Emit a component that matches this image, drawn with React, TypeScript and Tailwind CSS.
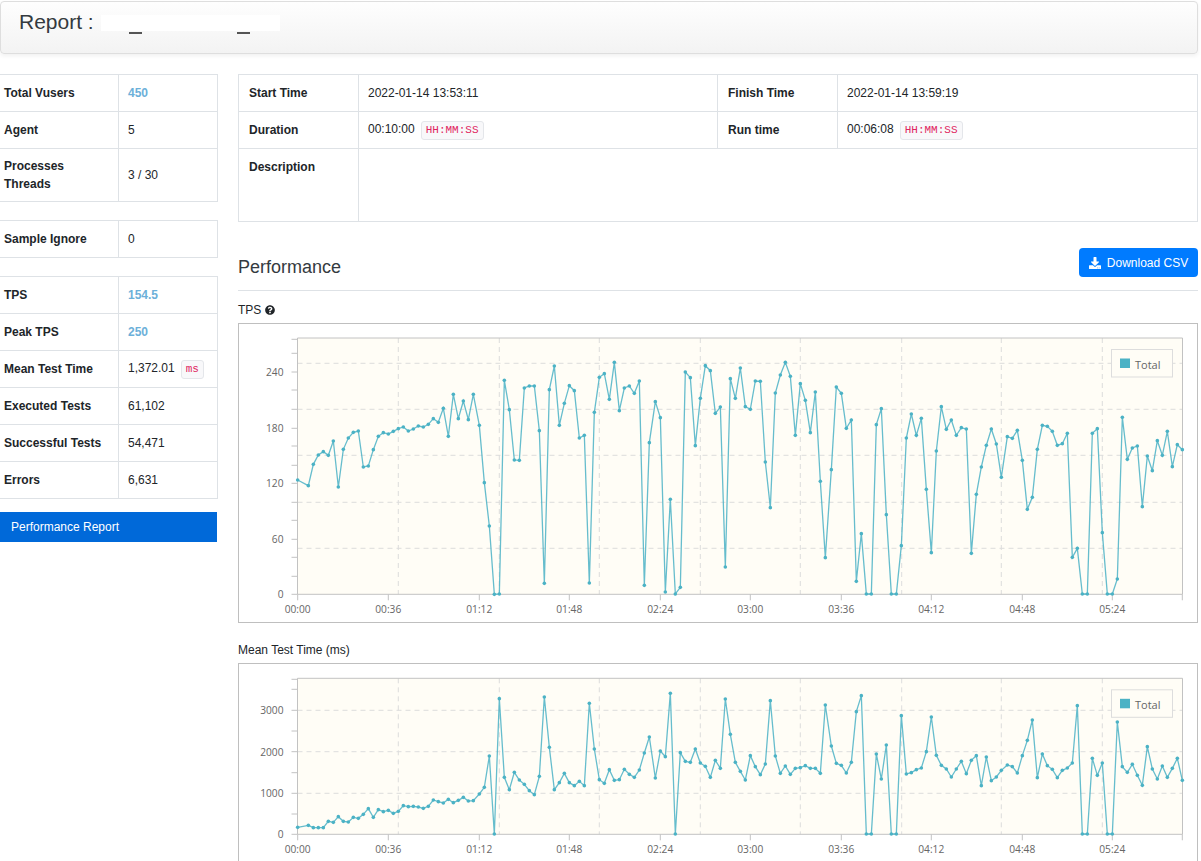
import { FaDownload, FaQuestionCircle } from 'react-icons/fa'

type Pt = [number, number]

// point positions as read off the reference, per crop; toPage turns them into page pixels
const toPage = (left: number, top: number, pts: Pt[]): Pt[] =>
  pts.map(([x, y]) => [left + x / 3, top + y / 3])

const tpsPoints: Pt[] = [
  ...toPage(230, 320, [[203,480],[235,497],[250,433],[265,405],[280,395],[295,406],[310,363],[325,501],[340,388],[355,354],[370,337],[385,333],[400,441],[415,438],[430,389],[445,349],[460,338],[475,342],[490,334],[505,326],[520,321],[535,333],[550,327],[565,318],[580,321],[595,313],[610,296],[625,307],[640,265],[655,349],[670,223],[685,296],[700,243],[715,299],[730,223],[748,316],[763,488],[778,618],[793,823],[808,822],[823,181],[838,269],[853,420],[868,421],[883,204],[898,198],[913,198],[928,332],[943,790],[958,209],[973,138],[988,316]]),
  ...toPage(560, 320, [[13,250],[28,197],[43,212],[58,354],[73,346],[88,789],[103,277],[118,172],[133,161],[148,238],[163,127],[178,272],[193,204],[208,198],[223,220],[238,183],[253,796],[268,368],[286,245],[301,293],[316,816],[331,538],[346,822],[361,802],[376,156],[391,173],[406,377],[421,235],[436,137],[451,152],[466,280],[481,261],[496,741],[511,176],[526,235],[541,144],[556,260],[571,268],[586,183],[601,184],[616,426],[631,563],[646,219],[661,165],[676,127],[691,169],[706,346],[721,191],[736,241],[751,338],[766,216],[781,484],[796,713],[814,449],[829,201],[844,220],[859,325],[874,300],[889,784],[904,641],[919,822],[934,822],[949,314],[964,266]]),
  ...toPage(880, 320, [[19,584],[34,822],[49,822],[64,677],[79,354],[94,282],[109,346],[124,295],[139,508],[154,698],[169,393],[184,260],[199,328],[214,300],[229,346],[244,323],[259,327],[274,700],[289,523],[304,441],[319,376],[334,327],[349,372],[364,472],[382,350],[397,355],[412,331],[427,421],[442,568],[457,532],[472,388],[487,316],[502,319],[517,334],[532,376],[547,371],[562,340],[577,712],[592,685],[607,822],[622,822],[637,340],[652,326],[667,638],[682,822],[697,822],[712,777],[727,292],[742,418],[757,384],[772,378],[787,560],[802,408],[817,452],[832,362],[847,406],[862,334],[877,440],[892,374],[907,389]]),
]

const meanPoints: Pt[] = [
  ...toPage(230, 640, [[203,562],[235,556],[250,563],[265,563],[280,563],[295,544],[310,547],[325,530],[340,544],[355,546],[370,532],[385,535],[400,523],[415,506],[430,532],[445,509],[460,515],[475,511],[490,520],[505,514],[520,497],[535,500],[550,499],[565,501],[580,505],[595,499],[610,480],[625,485],[640,489],[655,478],[670,488],[685,481],[700,472],[715,483],[730,482],[748,462],[763,442],[778,348],[793,582],[808,176],[823,412],[838,449],[853,397],[868,420],[883,433],[898,452],[913,464],[928,409],[943,171],[958,322],[973,449],[988,428]]),
  ...toPage(560, 640, [[13,400],[28,428],[43,437],[58,424],[73,437],[88,190],[103,327],[118,419],[133,430],[148,389],[163,421],[178,419],[193,388],[208,403],[223,412],[238,390],[253,339],[268,291],[286,414],[301,333],[316,350],[331,160],[346,582],[361,338],[376,364],[391,367],[406,327],[421,369],[436,379],[451,412],[466,361],[481,385],[496,177],[511,283],[526,367],[541,394],[556,420],[571,347],[586,380],[601,404],[616,372],[631,182],[646,348],[661,400],[676,378],[691,403],[706,385],[721,383],[736,377],[751,385],[766,385],[781,400],[796,195],[814,318],[829,370],[844,376],[859,399],[874,367],[889,215],[904,167],[919,582],[934,582],[949,342],[964,417]]),
  ...toPage(880, 640, [[19,315],[34,582],[49,582],[64,227],[79,402],[94,398],[109,389],[124,384],[139,335],[154,231],[169,346],[184,376],[199,387],[214,411],[229,387],[244,364],[259,401],[274,361],[289,347],[304,437],[319,351],[334,422],[349,411],[364,391],[382,375],[397,380],[412,399],[427,347],[442,301],[457,240],[472,413],[487,342],[502,377],[517,388],[532,413],[547,391],[562,384],[577,369],[592,197],[607,582],[622,582],[637,355],[652,406],[667,369],[682,582],[697,582],[712,246],[727,380],[742,397],[757,373],[772,406],[787,436],[802,320],[817,387],[832,417],[847,378],[862,412],[877,385],[892,355],[907,421]]),
]

const xTicks: [number, string][] = [
  [297.7, '00:00'], [388.3, '00:36'], [479.3, '01:12'], [569.3, '01:48'], [660.3, '02:24'],
  [750.3, '03:00'], [841.3, '03:36'], [931.3, '04:12'], [1022.3, '04:48'], [1112.3, '05:24'], [1182.3, ''],
]
const vGrid = [398.3, 499.3, 599.3, 700.3, 800.3, 901.7, 1001.3, 1102.3]

type ChartProps = {
  top: number
  height: number
  plotTop: number
  plotBottom: number
  points: Pt[]
  hGrid: number[]
  yLabels: [number, string][]
  minorTicks: number[]
}

function Chart({ top, height, plotTop, plotBottom, points, hGrid, yLabels, minorTicks }: ChartProps) {
  const left = 297.5
  const right = 1182.5
  return (
    <svg
      viewBox={`238 ${top} 960 ${height}`}
      width={960}
      height={height}
      className="block font-['Open_Sans',sans-serif]"
    >
      <rect x={238.5} y={top + 0.5} width={959} height={height - 1} fill="#fff" stroke="#bfbfbf" />
      <rect x={left} y={plotTop} width={right - left} height={plotBottom - plotTop} fill="#fffdf6" />
      {hGrid.map((y) => (
        <line key={y} x1={left} x2={right} y1={y} y2={y} stroke="#dddddd" strokeDasharray="5 4" />
      ))}
      {vGrid.map((x) => (
        <line key={x} x1={x} x2={x} y1={plotTop} y2={plotBottom} stroke="#dddddd" strokeDasharray="5 4" />
      ))}
      <path
        d={`M${left} ${plotBottom}V${plotTop}H${right}V${plotBottom}Z`}
        fill="none"
        stroke="#c2c2c2"
      />
      {minorTicks.map((y) => (
        <line key={y} x1={291.5} x2={left} y1={y} y2={y} stroke="#c2c2c2" />
      ))}
      {xTicks.map(([x, label]) => (
        <g key={x}>
          <line x1={x} x2={x} y1={plotBottom} y2={plotBottom + 6} stroke="#c2c2c2" />
          <text x={x} y={plotBottom + 19} textAnchor="middle" fontSize={10.2} fill="#666">
            {label}
          </text>
        </g>
      ))}
      {yLabels.map(([y, label]) => (
        <text key={label} x={283.5} y={y + 4} textAnchor="end" fontSize={10.2} fill="#666">
          {label}
        </text>
      ))}
      <polyline
        points={points.map(([x, y]) => `${x},${y}`).join(' ')}
        fill="none"
        stroke="#4bb2c5"
        strokeWidth={1.3}
        strokeOpacity={0.85}
      />
      {points.map(([x, y]) => (
        <circle key={x} cx={x} cy={y} r={1.8} fill="#4bb2c5" />
      ))}
      <rect x={1111.5} y={plotTop + 11.5} width={61} height={27.5} fill="#fffdf6" stroke="#dddddd" />
      <rect x={1120} y={plotTop + 20.5} width={10} height={9.5} fill="#4bb2c5" />
      <text x={1135} y={plotTop + 30.5} fontSize={11} fill="#666">
        Total
      </text>
    </svg>
  )
}

function Code({ children }: { children: string }) {
  return (
    <code className="ml-[6px] inline-block h-[19px] rounded-[3px] border border-[#e4e6ea] bg-[#f8f8fa] px-[4px] align-middle font-['Liberation_Mono',monospace] text-[11px] leading-[17px] text-[#e0245e]">
      {children}
    </code>
  )
}

const labelCell = 'border border-[#dee2e6] pl-1 text-left font-bold'
const valueCell = 'border border-[#dee2e6] pl-[9px] text-left'

function StatTable({ rows, className }: { rows: { label: React.ReactNode; value: React.ReactNode; tall?: boolean }[]; className?: string }) {
  return (
    <table className={`w-[218px] table-fixed border-collapse ${className ?? ''}`}>
      <colgroup>
        <col className="w-[119px]" />
        <col className="w-[99px]" />
      </colgroup>
      <tbody>
        {rows.map((row, i) => (
          <tr key={i} className={row.tall ? 'h-[53px]' : 'h-[37px]'}>
            <th className={`${labelCell} leading-[18px]`}>{row.label}</th>
            <td className={valueCell}>{row.value}</td>
          </tr>
        ))}
      </tbody>
    </table>
  )
}

function Blue({ children }: { children: string }) {
  return <span className="font-bold text-[#6cb0d9]">{children}</span>
}

export default function App() {
  return (
    <div className="h-[861px] overflow-hidden bg-white font-['Liberation_Sans',Arial,sans-serif] text-[12px] text-[#212529]">
      {/* Title bar */}
      <header className="mt-px flex h-[53px] w-[1198px] items-center rounded-[4px] border border-[#dedede] bg-gradient-to-b from-[#fefefe] to-[#f3f3f3] pb-[12px] pl-[18px] shadow-[0_2px_4px_rgba(0,0,0,0.06)]">
        <h1 className="text-[21px] leading-none text-[#343a40]">Report :</h1>
        <span className="relative ml-[7px] mt-[2px] h-[16px] w-[179px] bg-white">
          <span className="absolute left-[28px] top-[17px] h-[2px] w-[13px] bg-[#555]" />
          <span className="absolute left-[136px] top-[17px] h-[2px] w-[13px] bg-[#555]" />
        </span>
      </header>

      <div className="mt-5 flex items-start">
        {/* Left column */}
        <aside className="-ml-px w-[239px] shrink-0 pr-5">
          <StatTable
            rows={[
              { label: 'Total Vusers', value: <Blue>450</Blue> },
              { label: 'Agent', value: '5' },
              { label: <>Processes<br />Threads</>, value: '3 / 30', tall: true },
            ]}
          />
          <StatTable className="mt-[18px]" rows={[{ label: 'Sample Ignore', value: '0' }]} />
          <StatTable
            className="mt-[18px]"
            rows={[
              { label: 'TPS', value: <Blue>154.5</Blue> },
              { label: 'Peak TPS', value: <Blue>250</Blue> },
              {
                label: 'Mean Test Time',
                value: (
                  <span className="whitespace-nowrap">
                    1,372.01
                    <Code>ms</Code>
                  </span>
                ),
              },
              { label: 'Executed Tests', value: '61,102' },
              { label: 'Successful Tests', value: '54,471' },
              { label: 'Errors', value: '6,631' },
            ]}
          />
          <div className="ml-px mt-[13px] flex h-[30px] w-[217px] items-center bg-[#0069d9] pl-[11px] text-white">
            Performance Report
          </div>
        </aside>

        {/* Main column */}
        <main className="w-[960px] shrink-0">
          <table className="w-[960px] table-fixed border-collapse">
            <colgroup>
              <col className="w-[120px]" />
              <col className="w-[359px]" />
              <col className="w-[120px]" />
              <col />
            </colgroup>
            <tbody>
              <tr className="h-[37px]">
                <th className="border border-[#dee2e6] pl-[10px] text-left font-bold">Start Time</th>
                <td className="border border-[#dee2e6] pl-[9px]">2022-01-14 13:53:11</td>
                <th className="border border-[#dee2e6] pl-[10px] text-left font-bold">Finish Time</th>
                <td className="border border-[#dee2e6] pl-[9px]">2022-01-14 13:59:19</td>
              </tr>
              <tr className="h-[37px]">
                <th className="border border-[#dee2e6] pl-[10px] text-left font-bold">Duration</th>
                <td className="border border-[#dee2e6] pl-[9px]">
                  00:10:00
                  <Code>HH:MM:SS</Code>
                </td>
                <th className="border border-[#dee2e6] pl-[10px] text-left font-bold">Run time</th>
                <td className="border border-[#dee2e6] pl-[9px]">
                  00:06:08
                  <Code>HH:MM:SS</Code>
                </td>
              </tr>
              <tr className="h-[73px]">
                <th className="border border-[#dee2e6] pl-[10px] pt-[9px] text-left align-top font-bold">Description</th>
                <td colSpan={3} className="border border-[#dee2e6]" />
              </tr>
            </tbody>
          </table>

          <div className="mt-[26px] flex h-[43px] items-start justify-between border-b border-[#dee2e6]">
            <h2 className="mt-[8px] text-[18px] leading-[22px] text-[#343a40]">Performance</h2>
            <button className="flex h-[29px] w-[119px] items-center justify-center gap-[6px] rounded-[4px] bg-[#007bff] text-white">
              <FaDownload className="h-[12px] w-[12px]" />
              Download CSV
            </button>
          </div>

          <div className="mt-[12px] flex h-[14px] items-center gap-[4px] leading-[14px]">
            TPS
            <FaQuestionCircle className="h-[10px] w-[10px]" />
          </div>
          <div className="mt-[6px]">
            <Chart
              top={323}
              height={300}
              plotTop={338}
              plotBottom={594.3}
              points={tpsPoints}
              hGrid={[363.3, 409.3, 455.3, 502.3, 548.3]}
              yLabels={[[372, '240'], [428, '180'], [483, '120'], [539, '60'], [594, '0']]}
              minorTicks={[339.3, 353.3, 372, 390, 409.3, 428.3, 446, 465.3, 483.3, 502.3, 520.3, 539.3, 557.3, 576.3, 594.3]}
            />
          </div>

          <div className="mt-[20px] h-[14px] leading-[14px]">Mean Test Time (ms)</div>
          <div className="mt-[6px]">
            <Chart
              top={663}
              height={300}
              plotTop={678.3}
              plotBottom={834.3}
              points={meanPoints}
              hGrid={[710.3, 751.7, 793.3]}
              yLabels={[[710.3, '3000'], [751.7, '2000'], [793.3, '1000'], [834, '0']]}
              minorTicks={[679.3, 689.3, 710.3, 731, 751.7, 772.7, 793.3, 814, 834.3]}
            />
          </div>
        </main>
      </div>
    </div>
  )
}
